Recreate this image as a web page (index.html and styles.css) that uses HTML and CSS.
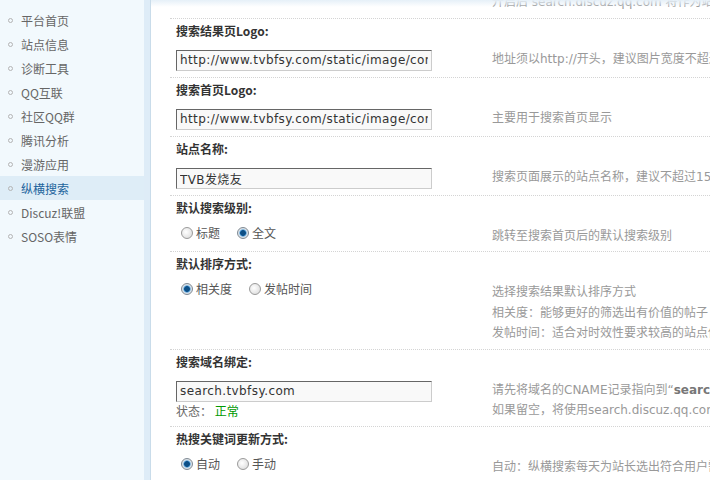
FILE: index.html
```html
<!DOCTYPE html>
<html lang="zh-CN">
<head>
    <meta charset="UTF-8">
    <title>纵横搜索</title>
    <link rel="stylesheet" href="styles.css">
</head>
<body>
    <div class="side">
        <ul class="menu">
            <li>平台首页</li>
            <li>站点信息</li>
            <li>诊断工具</li>
            <li>QQ互联</li>
            <li>社区QQ群</li>
            <li>腾讯分析</li>
            <li>漫游应用</li>
            <li class="on">纵横搜索</li>
            <li>Discuz!联盟</li>
            <li>SOSO表情</li>
        </ul>
    </div>

    <div class="main">
        <div class="form">
            <div class="row">
                <div class="field"></div>
                <div class="tips">开启后 search.discuz.qq.com 将作为站点搜索</div>
            </div>

            <div class="blk">
                <div class="lbl">搜索结果页Logo:</div>
                <div class="row">
                    <div class="field"><input class="txt" type="text" value="http://www.tvbfsy.com/static/image/common/logo.png"></div>
                    <div class="tips">地址须以http://开头，建议图片宽度不超过200px，高度不超过60px</div>
                </div>
            </div>

            <div class="blk">
                <div class="lbl">搜索首页Logo:</div>
                <div class="row">
                    <div class="field"><input class="txt" type="text" value="http://www.tvbfsy.com/static/image/common/logo.png"></div>
                    <div class="tips">主要用于搜索首页显示</div>
                </div>
            </div>

            <div class="blk">
                <div class="lbl">站点名称:</div>
                <div class="row">
                    <div class="field"><input class="txt" type="text" value="TVB发烧友"></div>
                    <div class="tips">搜索页面展示的站点名称，建议不超过15个字</div>
                </div>
            </div>

            <div class="blk">
                <div class="lbl">默认搜索级别:</div>
                <div class="row">
                    <div class="field opts">
                        <span class="opt"><i class="radio"></i>标题</span>
                        <span class="opt"><i class="radio on"></i>全文</span>
                    </div>
                    <div class="tips">跳转至搜索首页后的默认搜索级别</div>
                </div>
            </div>

            <div class="blk">
                <div class="lbl">默认排序方式:</div>
                <div class="row">
                    <div class="field opts">
                        <span class="opt"><i class="radio on"></i>相关度</span>
                        <span class="opt"><i class="radio"></i>发帖时间</span>
                    </div>
                    <div class="tips">
                        选择搜索结果默认排序方式<br>
                        相关度：能够更好的筛选出有价值的帖子<br>
                        发帖时间：适合对时效性要求较高的站点使用
                    </div>
                </div>
            </div>

            <div class="blk">
                <div class="lbl">搜索域名绑定:</div>
                <div class="row">
                    <div class="field">
                        <input class="txt" type="text" value="search.tvbfsy.com">
                        <div class="state">状态： <span class="ok">正常</span></div>
                    </div>
                    <div class="tips">
                        请先将域名的CNAME记录指向到“<b>search.discuz.qq.com</b>”<br>
                        如果留空，将使用search.discuz.qq.com
                    </div>
                </div>
            </div>

            <div class="blk">
                <div class="lbl">热搜关键词更新方式:</div>
                <div class="row">
                    <div class="field opts">
                        <span class="opt"><i class="radio on"></i>自动</span>
                        <span class="opt"><i class="radio"></i>手动</span>
                    </div>
                    <div class="tips">自动：纵横搜索每天为站长选出符合用户需求的热搜关键词</div>
                </div>
            </div>
        </div>
    </div>
</body>
</html>
```

FILE: styles.css
```css
html, body {
    margin: 0;
    height: 480px;
    overflow: hidden;
}
body {
    display: flex;
    font-family: "DejaVu Sans", "Noto Sans CJK SC", sans-serif;
    font-size: 12px;
    color: #333;
    background-color: #fff;
}
.side {
    width: 144px;
    flex: none;
    background-color: #f2f9fd;
    border-right: 6px solid #deecf7;
}
.menu {
    list-style: none;
    margin: 0;
    padding: 8px 0 0;
}
.menu li {
    display: flex;
    align-items: center;
    height: 24px;
    padding-left: 8px;
    color: #666;
    font-family: "Noto Sans CJK SC", sans-serif;
}
.menu li::before {
    content: "";
    width: 3px;
    height: 3px;
    border: 1px solid #b4b4b4;
    border-radius: 50%;
    margin-right: 8px;
}
.menu li.on {
    background-color: #deedf7;
    color: #22649c;
}
.main {
    flex: 1;
    position: relative;
    overflow: hidden;
    border-left: 1px solid #c9dcea;
    padding-left: 19px;
}
.main::before {
    content: "";
    position: absolute;
    left: 0;
    right: 0;
    top: 0;
    height: 7px;
    background: linear-gradient(#e6f0f8, rgba(255,255,255,0));
}
.form {
    width: 900px;
    margin-top: -17px;
}
.blk {
    border-top: 1px dotted #d4d4d4;
}
.lbl {
    padding: 3px 6px 0;
    line-height: 18px;
    font-family: "Noto Sans CJK SC", sans-serif;
    font-weight: bold;
    color: #333;
}
.row {
    display: grid;
    grid-template-columns: 316px 1fr;
}
.field {
    padding: 10px 6px 6px;
}
.field.opts {
    display: flex;
    align-items: flex-start;
    padding: 7px 6px 0;
    line-height: 18px;
    font-family: "Noto Sans CJK SC", sans-serif;
    color: #555;
}
.opt {
    display: flex;
    align-items: center;
    height: 18px;
    margin-left: 5px;
    margin-right: 12px;
}
.radio {
    width: 10px;
    height: 10px;
    border: 1px solid #9a9a9a;
    border-radius: 50%;
    margin-right: 3px;
    background: radial-gradient(circle at 40% 40%, #fff, #d6d6d6);
}
.radio.on {
    border-color: #7f8a94;
    background: radial-gradient(circle, #0d4f86 0 2.5px, #3f8fcc 3px, #cfe0ee 4px, #e4e4e4 5px);
}
.txt {
    display: block;
    box-sizing: border-box;
    width: 256px;
    height: 21px;
    margin: 0;
    padding: 0 3px;
    border: 1px solid;
    border-color: #666 #ccc #ccc #666;
    background-color: #f9f9f9;
    font-family: "DejaVu Sans", "Noto Sans CJK SC", sans-serif;
    font-size: 12px;
    letter-spacing: 0.4px;
    color: #333;
    outline: none;
}
.state {
    line-height: 18px;
    font-family: "Noto Sans CJK SC", sans-serif;
    color: #666;
}
.ok {
    color: #090;
}
.tips {
    padding: 9px 6px 5px;
    line-height: 20.5px;
    white-space: nowrap;
    color: #999;
    font-family: "DejaVu Sans", "Noto Sans CJK SC", sans-serif;
}
.tips b {
    color: #777;
}
```
